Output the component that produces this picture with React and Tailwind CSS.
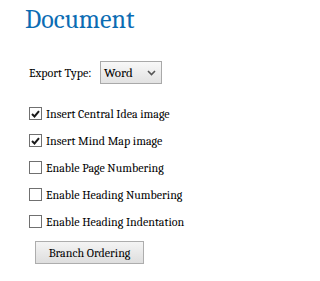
import React, { useState } from "react";

const options = [
  { label: "Insert Central Idea image", checked: true },
  { label: "Insert Mind Map image", checked: true },
  { label: "Enable Page Numbering", checked: false },
  { label: "Enable Heading Numbering", checked: false },
  { label: "Enable Heading Indentation", checked: false },
];

const CheckBox = ({ checked, onClick }) => (
  <span
    onClick={onClick}
    className="flex h-[13px] w-[13px] shrink-0 items-center justify-center border border-[#707070] bg-white"
  >
    {checked && (
      <svg width="9" height="8" viewBox="0 0 9 8">
        <path d="M1 4 L3.5 6.5 L8 1.2" fill="none" stroke="#1a1a1a" strokeWidth="2" />
      </svg>
    )}
  </span>
);

export default function App() {
  const [checks, setChecks] = useState(options.map((o) => o.checked));

  const toggle = (i) => {
    const next = [...checks];
    next[i] = !next[i];
    setChecks(next);
  };

  return (
    <div className="min-h-screen bg-white pl-[25px] pt-[5px] font-serif text-[12px] text-black">
      <h1 className="text-[26px] leading-[30px] font-normal text-[#0b6cb3]">Document</h1>

      <div className="pl-[4px]">
        {/* export type */}
        <div className="mt-[26px] flex h-[23px] items-center">
          <span className="w-[71px] shrink-0 whitespace-nowrap">Export Type:</span>
          <div className="flex h-[23px] w-[62px] items-center justify-between border border-[#a9a9a9] bg-gradient-to-b from-[#f8f8f8] to-[#e2e2e2] pl-[3px] pr-[5px]">
            <span className="text-[13px]">Word</span>
            <svg width="9" height="6" viewBox="0 0 9 6">
              <path d="M1 1 L4.5 4.5 L8 1" fill="none" stroke="#555" strokeWidth="1.6" />
            </svg>
          </div>
        </div>

        {/* options */}
        <div className="mt-[16px] flex flex-col">
          {options.map((o, i) => (
            <label key={o.label} className="flex h-[27px] items-center gap-[4px] whitespace-nowrap">
              <CheckBox checked={checks[i]} onClick={() => toggle(i)} />
              <span>{o.label}</span>
            </label>
          ))}
        </div>

        <button className="ml-[6px] mt-[6px] h-[23px] w-[109px] border border-[#adadad] bg-gradient-to-b from-[#f4f4f4] to-[#dedede] font-serif text-[12px]">
          Branch Ordering
        </button>
      </div>
    </div>
  );
}
